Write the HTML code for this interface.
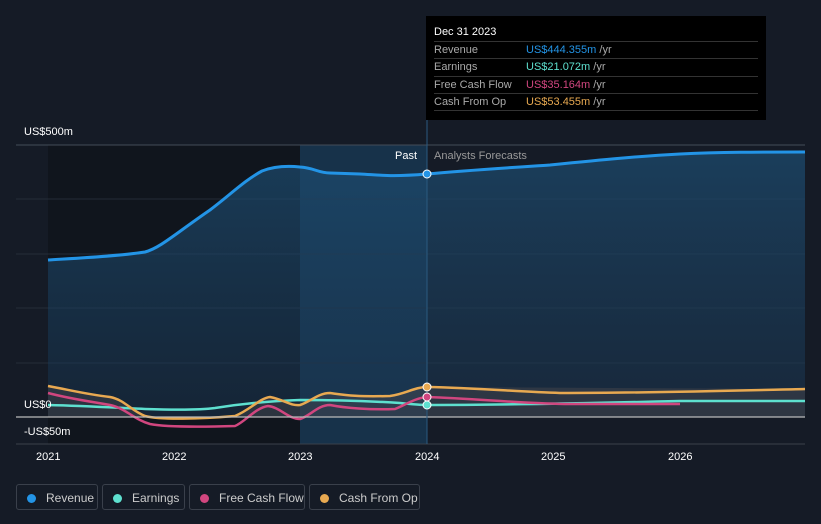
<!DOCTYPE html>
<html><head><meta charset="utf-8"><style>
body{margin:0;width:821px;height:524px;background:#151b26;font-family:"Liberation Sans",sans-serif;overflow:hidden;position:relative}
.tt{position:absolute;left:426px;top:16px;width:340px;height:104px;background:#000;color:#fff;font-size:11px}
.tt .h{position:absolute;left:8px;top:10px;font-size:11px}
.row{position:absolute;left:8px;width:324px;border-top:1px solid #333;height:17px;line-height:17px;color:#aaa}
.row span{position:absolute;left:92px}
.lg{position:absolute;top:484px;height:26px;border:1px solid #3a404b;border-radius:3px;color:#ccc;font-size:12px;line-height:26px;box-sizing:border-box}
.lg i{display:inline-block;width:9px;height:9px;border-radius:50%;margin:0 10px 0 10px;vertical-align:-1px}
.ax{position:absolute;color:#fff;font-size:11px}
</style></head><body>
<svg width="821" height="524" style="position:absolute;left:0;top:0">
<defs><linearGradient id="rg" x1="0" y1="0" x2="0" y2="1"><stop offset="0" stop-color="#1d4d72" stop-opacity=".7"/><stop offset="1" stop-color="#1a3550" stop-opacity=".5"/></linearGradient></defs>
<rect x="48" y="145" width="252" height="299" fill="#10151d"/>
<rect x="300" y="145" width="127" height="299" fill="#17324a"/>
<line x1="16" y1="145" x2="805" y2="145" stroke="#444c58"/>
<line x1="16" y1="199" x2="805" y2="199" stroke="#252c38"/>
<line x1="16" y1="254" x2="805" y2="254" stroke="#252c38"/>
<line x1="16" y1="308" x2="805" y2="308" stroke="#252c38"/>
<line x1="16" y1="363" x2="805" y2="363" stroke="#252c38"/>
<path d="M48,260 C80,258 120,256 145,252 C160,248 175,234 210,210 C230,195 245,180 262,171 C275,166 290,166 300,167 C315,168 318,173 330,173 L360,174 C380,175 390,177 427,174 C470,170 520,167 550,165 C600,160 640,156 680,154 C720,152 760,152 805,152 L805,417 L48,417 Z" fill="url(#rg)"/>
<path d="M48,260 C80,258 120,256 145,252 C160,248 175,234 210,210 C230,195 245,180 262,171 C275,166 290,166 300,167 C315,168 318,173 330,173 L360,174 C380,175 390,177 427,174 C470,170 520,167 550,165 C600,160 640,156 680,154 C720,152 760,152 805,152" fill="none" stroke="#2394e6" stroke-width="3"/>
<path d="M48,386 C70,390 85,394 110,397 C125,400 130,410 145,416 C160,420 200,419 235,416 C250,410 260,398 270,397 C285,400 290,406 300,405 C310,402 318,393 330,393 C345,395 355,397 390,396 C405,394 415,387 427,387 L805,389 L805,417 L48,417 Z" fill="#5a5050" opacity=".35"/>
<path d="M48,405 C90,406 120,408 145,409 C175,410 200,410 215,408 C240,404 270,401 300,400 C330,400 370,401 400,403 C410,404 420,405 427,405 C500,405 600,403 680,401 L805,401" fill="none" stroke="#5ee0cf" stroke-width="2.5"/>
<path d="M48,393 C75,400 95,402 110,405 C125,408 135,420 150,424 C165,427 200,427 235,426 C245,422 255,408 268,406 C280,407 288,419 300,419 C310,416 318,405 330,405 C345,408 370,410 395,409 C405,405 415,398 427,397 C480,399 530,404 570,404 L680,404" fill="none" stroke="#d1467f" stroke-width="2.5"/>
<path d="M48,386 C70,390 85,394 110,397 C125,400 130,410 145,416 C160,420 200,419 235,416 C250,410 260,398 270,397 C285,400 290,406 300,405 C310,402 318,393 330,393 C345,395 355,397 390,396 C405,394 415,387 427,387 C480,388 520,392 560,393 C650,393 720,391 805,389" fill="none" stroke="#e8a951" stroke-width="2.5"/>
<line x1="16" y1="417" x2="805" y2="417" stroke="#bbb" stroke-width="1.2"/>
<line x1="16" y1="444" x2="805" y2="444" stroke="#3a404b"/>
<line x1="427" y1="120" x2="427" y2="444" stroke="#2a5a80"/>
<circle cx="427" cy="174" r="4" fill="#2394e6" stroke="#fff" stroke-width="1"/>
<circle cx="427" cy="387" r="4" fill="#e8a951" stroke="#fff" stroke-width="1"/>
<circle cx="427" cy="397" r="4" fill="#d1467f" stroke="#fff" stroke-width="1"/>
<circle cx="427" cy="405" r="4" fill="#5ee0cf" stroke="#fff" stroke-width="1"/>
</svg>
<div class="ax" style="left:24px;top:126px">US$500m</div>
<div class="ax" style="left:24px;top:399px">US$0</div>
<div class="ax" style="left:24px;top:426px">-US$50m</div>
<div class="ax" style="left:395px;top:150px">Past</div>
<div class="ax" style="left:434px;top:150px;color:#999">Analysts Forecasts</div>
<div class="ax" style="left:36px;top:451px">2021</div>
<div class="ax" style="left:162px;top:451px">2022</div>
<div class="ax" style="left:288px;top:451px">2023</div>
<div class="ax" style="left:415px;top:451px">2024</div>
<div class="ax" style="left:541px;top:451px">2025</div>
<div class="ax" style="left:668px;top:451px">2026</div>
<div class="tt"><div class="h">Dec 31 2023</div>
<div class="row" style="top:25px">Revenue<span><b style="font-weight:normal;color:#2394e6">US$444.355m</b> /yr</span></div>
<div class="row" style="top:42px">Earnings<span><b style="font-weight:normal;color:#5ee0cf">US$21.072m</b> /yr</span></div>
<div class="row" style="top:60px">Free Cash Flow<span><b style="font-weight:normal;color:#d1467f">US$35.164m</b> /yr</span></div>
<div class="row" style="top:77px">Cash From Op<span><b style="font-weight:normal;color:#e8a951">US$53.455m</b> /yr</span></div>
<div class="row" style="top:94px;height:0"></div>
</div>
<div class="lg" style="left:16px;width:82px"><i style="background:#2394e6"></i>Revenue</div>
<div class="lg" style="left:102px;width:83px"><i style="background:#5ee0cf"></i>Earnings</div>
<div class="lg" style="left:189px;width:116px"><i style="background:#d1467f"></i>Free Cash Flow</div>
<div class="lg" style="left:309px;width:111px"><i style="background:#e8a951"></i>Cash From Op</div>
</body></html>
